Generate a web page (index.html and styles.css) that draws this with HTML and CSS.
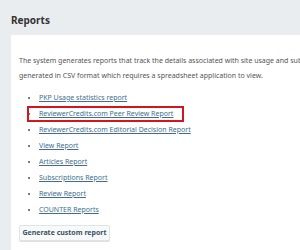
FILE: index.html
```html
<!DOCTYPE html>
<html lang="en">
<head>
    <meta charset="UTF-8">
    <meta name="viewport" content="width=device-width, initial-scale=1.0">
    <title>Reports</title>
    <link rel="stylesheet" href="styles.css">
</head>
<body>
    <div class="page">
        <h1 class="page-title">Reports</h1>

        <!-- Reports panel -->
        <div class="panel">
            <p class="intro">The system generates reports that track the details associated with site usage and submissions over a given period of time. Reports are generated in CSV format which requires a spreadsheet application to view.</p>

            <ul class="report-list">
                <li><a href="#">PKP Usage statistics report</a></li>
                <li><span class="highlight"><a href="#">ReviewerCredits.com Peer Review Report</a></span></li>
                <li><a href="#">ReviewerCredits.com Editorial Decision Report</a></li>
                <li><a href="#">View Report</a></li>
                <li><a href="#">Articles Report</a></li>
                <li><a href="#">Subscriptions Report</a></li>
                <li><a href="#">Review Report</a></li>
                <li><a href="#">COUNTER Reports</a></li>
            </ul>

            <button class="btn">Generate custom report</button>
        </div>
    </div>
</body>
</html>
```

FILE: styles.css
```css
* {
    box-sizing: border-box;
    margin: 0;
    padding: 0;
}

body {
    font-family: "Noto Sans", "Open Sans", sans-serif;
    background-color: #eaedef;
    color: #555;
    overflow: hidden;
}

.page {
    width: 520px;
    padding: 0 0 0 11px;
}

.page-title {
    font-size: 10px;
    font-weight: bold;
    color: #333;
    line-height: 14px;
    padding-top: 13px;
    height: 35px;
}

.panel {
    background-color: #fff;
    padding: 18px 8px 20px 8px;
}

.intro {
    font-size: 7px;
    line-height: 15px;
    color: #555;
    width: 455px;
}

.report-list {
    margin-top: 7px;
    padding-left: 20px;
    font-size: 7px;
    line-height: 16px;
}

.report-list a {
    color: #416e8e;
    text-decoration: underline;
}

.highlight {
    position: relative;
}

.highlight::after {
    content: "";
    position: absolute;
    left: -12px;
    right: -11px;
    top: -3px;
    bottom: -4px;
    border: 2px solid #d3151c;
}

.btn {
    margin-top: 6px;
    font-family: inherit;
    font-size: 7px;
    font-weight: bold;
    color: #3b5363;
    background-color: #f8f9fa;
    border: 1px solid #e1e4e6;
    border-radius: 2px;
    box-shadow: 0 1px 0 #dde0e2;
    height: 16px;
    width: 91px;
}
```
